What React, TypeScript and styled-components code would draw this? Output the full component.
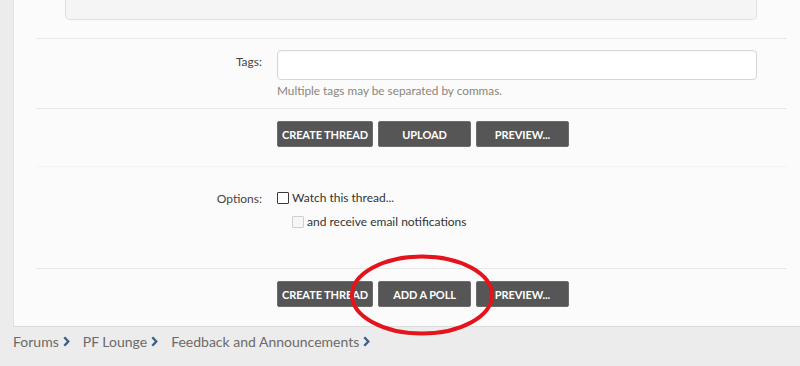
import React from "react";
import styled, { createGlobalStyle } from "styled-components";

const Global = createGlobalStyle`
  html, body { margin: 0; padding: 0; background: #ececec; overflow: hidden; }
  body { font-family: Lato, "Open Sans", sans-serif; }
`;

const Page = styled.div`
  position: relative;
  width: 800px;
  height: 366px;
  overflow: hidden;
`;

const Panel = styled.div`
  margin-left: 13px;
  width: 796px;
  height: 327px;
  box-sizing: border-box;
  background: #fbfbfb;
  border-left: 1px solid #e2e2e2;
  border-bottom: 1px solid #dcdcdc;
  display: flex;
  flex-direction: column;
`;

const EditorBox = styled.div`
  margin: 0 52px 0 51px;
  height: 20px;
  background: #f5f5f5;
  border: 1px solid #e0e0e0;
  border-top: none;
  border-radius: 0 0 5px 5px;
  box-sizing: border-box;
`;

const Row = styled.div<{ $pt: number; $pb: number; $mt?: number; $faint?: boolean }>`
  margin: ${(p) => p.$mt ?? 0}px 22px 0 22px;
  padding: ${(p) => p.$pt}px 0 ${(p) => p.$pb}px 0;
  border-top: 1px solid ${(p) => (p.$faint ? "#f3f3f3" : "#e8e8e8")};
  display: grid;
  grid-template-columns: 226px 480px;
  column-gap: 15px;
  align-items: start;
`;

const Label = styled.div<{ $top: number }>`
  text-align: right;
  font-size: 12px;
  color: #454545;
  padding-top: ${(p) => p.$top}px;
`;

const Field = styled.div`
  display: flex;
  flex-direction: column;
`;

const TextInput = styled.input`
  height: 30px;
  box-sizing: border-box;
  border: 1px solid #d6d6d6;
  border-radius: 4px;
  background: #fff;
  box-shadow: inset 0 1px 2px rgba(0, 0, 0, 0.04);
  outline: none;
`;

const Hint = styled.div`
  margin-top: 3px;
  font-size: 11.8px;
  line-height: 16px;
  color: #8a8580;
`;

const ButtonBar = styled.div`
  display: flex;
  gap: 5px;
`;

const Button = styled.button<{ $w: number }>`
  width: ${(p) => p.$w}px;
  height: 26px;
  padding: 0;
  box-sizing: border-box;
  background: #565656;
  border: 1px solid #6c6c6c;
  border-radius: 2px;
  color: #fff;
  font-family: Lato, "Open Sans", sans-serif;
  font-weight: 700;
  font-size: 11px;
  letter-spacing: -0.1px;
  text-transform: uppercase;
  cursor: pointer;
`;

const Options = styled.div`
  display: flex;
  flex-direction: column;
  gap: 10px;
  padding-top: 8px;
`;

const Check = styled.label<{ $indent?: boolean }>`
  display: flex;
  align-items: center;
  gap: 3px;
  margin-left: ${(p) => (p.$indent ? 15 : 0)}px;
  font-size: 12px;
  color: #333;
  line-height: 14px;
`;

const Box = styled.input<{ $disabled?: boolean }>`
  appearance: none;
  margin: 0;
  width: 12px;
  height: 12px;
  box-sizing: border-box;
  border: 1px solid ${(p) => (p.$disabled ? "#cfcfcf" : "#3a3a3a")};
  background: ${(p) => (p.$disabled ? "#f6f6f6" : "#fff")};
  border-radius: 1px;
`;

const Breadcrumb = styled.nav`
  display: flex;
  align-items: center;
  padding-left: 13px;
  height: 29px;
  font-size: 14px;
  color: #6d6a68;
`;

const Crumb = styled.span`
  display: flex;
  align-items: center;
  gap: 4px;
  margin-right: 13px;
`;

const Circle = styled.svg`
  position: absolute;
  left: 349px;
  top: 254px;
  pointer-events: none;
`;

const Chevron = () => (
  <svg width="7" height="11" viewBox="0 0 7 11">
    <polyline points="1.3,1.2 5.3,5.5 1.3,9.8" fill="none" stroke="#3f5f88" strokeWidth="2.4" />
  </svg>
);

export default function App() {
  return (
    <Page>
      <Global />
      <Panel>
        <EditorBox />
        <Row $mt={18} $pt={11} $pb={9}>
          <Label $top={4}>Tags:</Label>
          <Field>
            <TextInput />
            <Hint>Multiple tags may be separated by commas.</Hint>
          </Field>
        </Row>
        <Row $pt={12} $pb={19}>
          <div />
          <ButtonBar>
            <Button $w={96}>Create Thread</Button>
            <Button $w={93}>Upload</Button>
            <Button $w={93}>Preview...</Button>
          </ButtonBar>
        </Row>
        <Row $faint $pt={16} $pb={39}>
          <Label $top={8}>Options:</Label>
          <Options>
            <Check>
              <Box type="checkbox" />
              Watch this thread...
            </Check>
            <Check $indent>
              <Box type="checkbox" $disabled disabled />
              and receive email notifications
            </Check>
          </Options>
        </Row>
        <Row $pt={12} $pb={0}>
          <div />
          <ButtonBar>
            <Button $w={96}>Create Thread</Button>
            <Button $w={93}>Add a Poll</Button>
            <Button $w={93}>Preview...</Button>
          </ButtonBar>
        </Row>
      </Panel>
      <Breadcrumb>
        <Crumb>Forums <Chevron /></Crumb>
        <Crumb>PF Lounge <Chevron /></Crumb>
        <Crumb>Feedback and Announcements <Chevron /></Crumb>
      </Breadcrumb>
      <Circle width="148" height="84" viewBox="0 0 148 84">
        <ellipse cx="73" cy="41" rx="70" ry="38.5" fill="none" stroke="#e3141b" strokeWidth="4" />
      </Circle>
    </Page>
  );
}
